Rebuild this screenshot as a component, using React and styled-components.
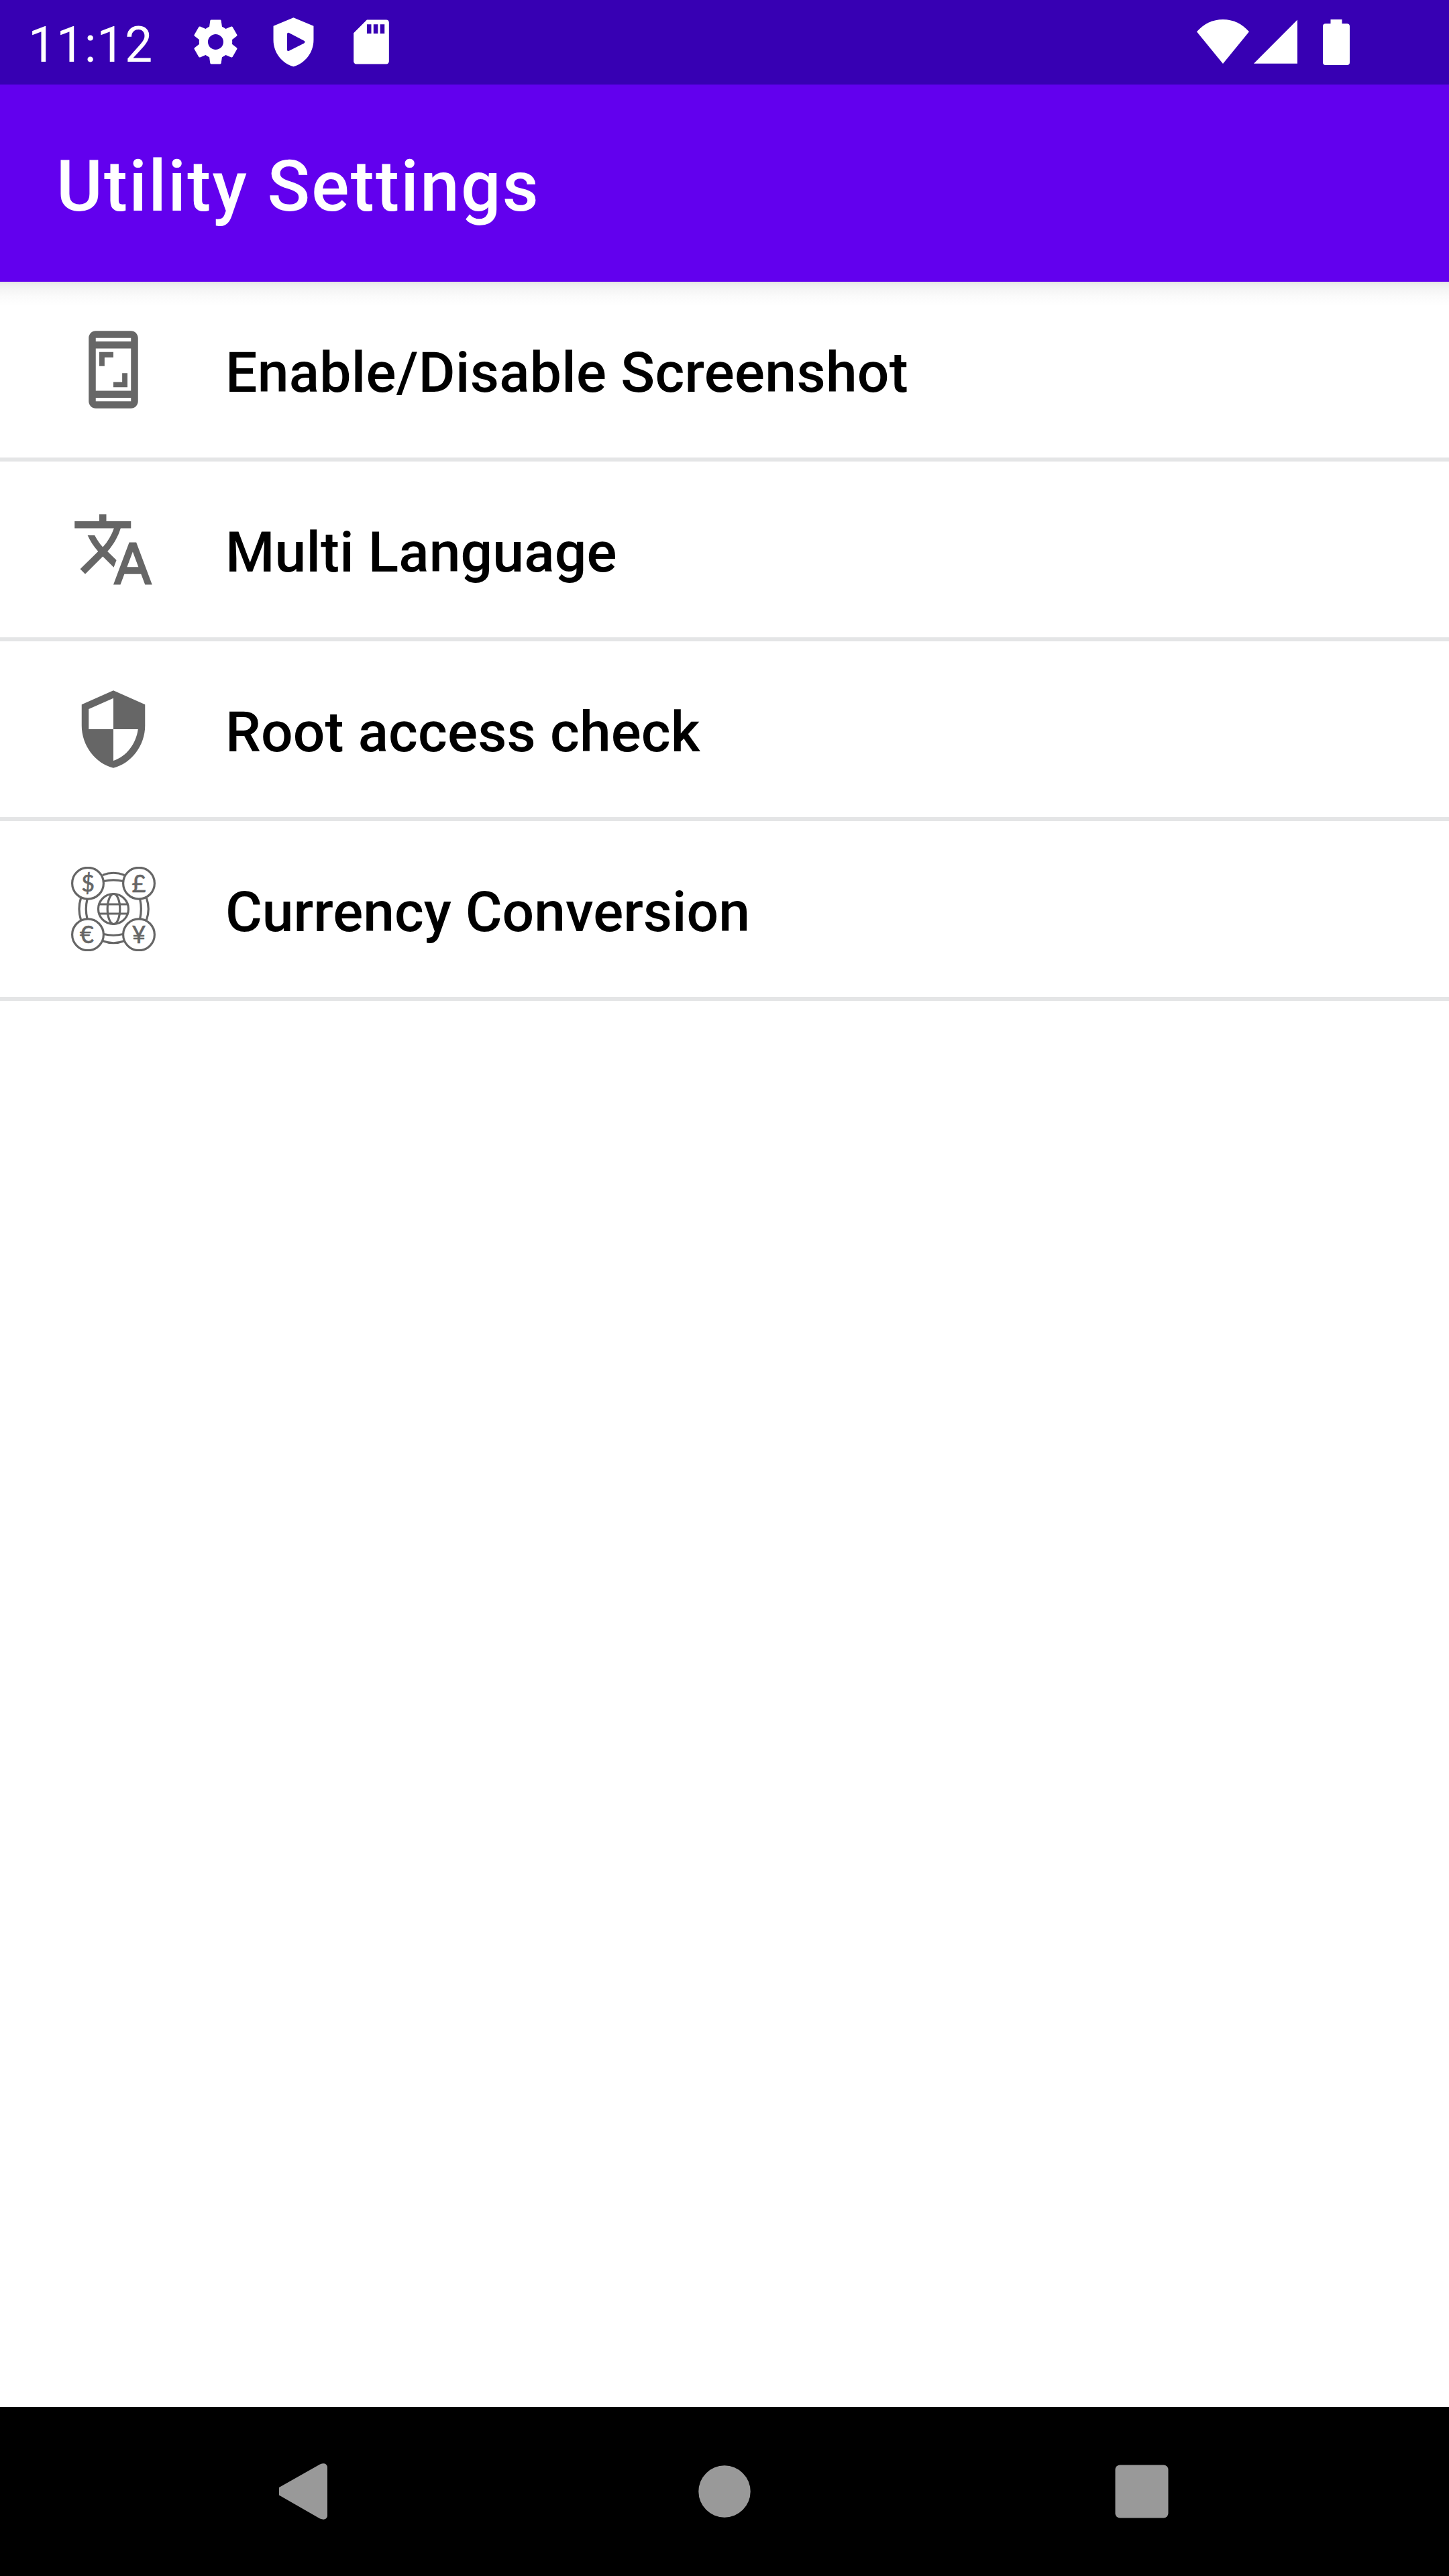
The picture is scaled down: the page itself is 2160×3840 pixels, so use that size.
import React from 'react';
import styled, { createGlobalStyle } from 'styled-components';

const GlobalStyle = createGlobalStyle`
  * { box-sizing: border-box; }
  body { margin: 0; background: #fff; }
`;

const Screen = styled.div`
  display: flex;
  flex-direction: column;
  width: 2160px;
  height: 3840px;
  background: #fff;
  font-family: Roboto, "Noto Sans", sans-serif;
`;

const StatusBar = styled.header`
  display: flex;
  flex: none;
  align-items: center;
  justify-content: space-between;
  height: 126px;
  padding: 0 148px 0 42px;
  background: #3700b3;
  color: #fff;
`;

const StatusGroup = styled.div`
  display: flex;
  align-items: center;
`;

const Clock = styled.time`
  width: 240px;
  padding-top: 0.1em;
  font-size: 73.5px;
  line-height: 1.172;
  letter-spacing: 0.6px;
`;

const Notifications = styled.div`
  display: flex;
  gap: 37px;
`;

const Glyph = styled.svg`
  display: block;
  flex: none;
  width: ${(p) => p.$w}px;
  height: ${(p) => p.$h ?? p.$w}px;
  margin-left: ${(p) => p.$gap ?? 0}px;
  fill: currentColor;
`;

const AppBar = styled.div`
  display: flex;
  flex: none;
  align-items: center;
  height: 294px;
  padding: 0 84px;
  background: #6200ee;
  color: #fff;
`;

const Title = styled.h1`
  margin: 0;
  padding-top: 0.1em;
  font-size: 105px;
  font-weight: 500;
  line-height: 1.172;
  letter-spacing: 2.25px;
`;

const List = styled.ul`
  flex: 1;
  margin: 0;
  padding: 0;
  list-style: none;
  background: linear-gradient(#e3e3e3 0, #eeeeee 4px, #f5f5f5 12px, #fbfbfb 22px, #fff 36px) no-repeat 0 0 / 100% 36px;
`;

const Row = styled.li`
  display: flex;
  align-items: center;
  gap: 104px;
  height: 268px;
  padding-left: 106px;
  border-bottom: 6px solid #e4e5e6;
  color: #666;
`;

const Label = styled.span`
  padding-top: 10px;
  color: #000;
  font-size: 84px;
  font-weight: 500;
  line-height: 1.172;
  letter-spacing: ${(p) => p.$tracking}px;
`;

const NavBar = styled.nav`
  display: grid;
  flex: none;
  grid-template-columns: repeat(3, 622px);
  align-items: center;
  justify-content: center;
  justify-items: center;
  height: 252px;
  background: #000;
  color: #999;
`;

const GearIcon = () => (
  <Glyph $w={79} viewBox="0 0 24 24">
    <path d="M19.43 12.98c.04-.32.07-.64.07-.98s-.03-.66-.07-.98l2.11-1.65c.19-.15.24-.42.12-.64l-2-3.46c-.12-.22-.39-.3-.61-.22l-2.49 1c-.52-.4-1.08-.73-1.69-.98l-.38-2.65C14.46 2.18 14.25 2 14 2h-4c-.25 0-.46.18-.49.42l-.38 2.65c-.61.25-1.17.59-1.69.98l-2.49-1c-.23-.09-.49 0-.61.22l-2 3.46c-.13.22-.07.49.12.64l2.11 1.65c-.04.32-.07.65-.07.98s.03.66.07.98l-2.11 1.65c-.19.15-.24.42-.12.64l2 3.46c.12.22.39.3.61.22l2.49-1c.52.4 1.08.73 1.69.98l.38 2.65c.03.24.24.42.49.42h4c.25 0 .46-.18.49-.42l.38-2.65c.61-.25 1.17-.59 1.69-.98l2.49 1c.23.09.49 0 .61-.22l2-3.46c.12-.22.07-.49-.12-.64l-2.11-1.65zM12 15.5c-1.93 0-3.5-1.57-3.5-3.5s1.57-3.5 3.5-3.5 3.5 1.57 3.5 3.5-1.57 3.5-3.5 3.5z" />
  </Glyph>
);

const ProtectIcon = () => (
  <Glyph $w={79} viewBox="0 0 24 24">
    <path
      fillRule="evenodd"
      d="M12 1L2.9 4.8v6.4C2.9 16.8 6.8 21.8 12 23.2c5.2-1.4 9.1-6.4 9.1-12V4.8zM9.1 8.5c0-.6.5-.8.9-.6l6.8 3.6c.5.3.5.8 0 1.1L10 16c-.5.3-.9 0-.9-.5z"
    />
  </Glyph>
);

const SdCardIcon = () => (
  <Glyph $w={79} viewBox="0 0 24 24">
    <path d="M18.8 2H10L4 8v12.8c0 .7.5 1.2 1.2 1.2h13.6c.7 0 1.2-.5 1.2-1.2V3.2c0-.7-.5-1.2-1.2-1.2zM12 8.2h-2V4h2zm3 0h-2V4h2zm3 0h-2V4h2z" />
  </Glyph>
);

const WifiIcon = () => (
  <Glyph $w={78} $h={68} viewBox="0 0 78 68">
    <path d="M0 18.3C11 6 24 0 39 0s28 6 39 18.3L39 66z" />
  </Glyph>
);

const SignalIcon = () => (
  <Glyph $w={65} $h={68} $gap={7} viewBox="0 0 65 68">
    <path d="M65 .5v65.3H0z" />
  </Glyph>
);

const BatteryIcon = () => (
  <Glyph $w={40} $h={68} $gap={38} viewBox="0 0 40 68">
    <path d="M11.500 0h17v6.300H36a4 4 0 0 1 4 4V64a4 4 0 0 1-4 4H4a4 4 0 0 1-4-4V10.300a4 4 0 0 1 4-4h7.500z" />
  </Glyph>
);

const ScreenshotIcon = () => (
  <Glyph $w={126} viewBox="0 0 24 24">
    <path d="M17 1H7c-1.100 0-2 .9-2 2v18c0 1.100.9 2 2 2h10c1.100 0 2-.9 2-2V3c0-1.100-.9-2-2-2zm0 20H7v-1h10v1zm0-3H7V6h10v12zm0-14H7V3h10v1zM9.500 8.500H12V7H8v4h1.500zM12 17h4v-4h-1.500v2.500H12z" />
  </Glyph>
);

const TranslateIcon = () => (
  <Glyph $w={126} viewBox="0 0 24 24">
    <path d="M12.870 15.070l-2.540-2.510.03-.03c1.740-1.940 2.980-4.170 3.710-6.530H17V4h-7V2H8v2H1v1.990h11.170C11.500 7.920 10.440 9.750 9 11.350 8.070 10.320 7.300 9.190 6.690 8h-2c.73 1.630 1.730 3.170 2.980 4.560l-5.090 5.020L4 19l5-5 3.110 3.110.76-2.040zM18.500 10h-2L12 22h2l1.120-3h4.750L21 22h2l-4.500-12zm-2.620 7l1.620-4.330L19.120 17h-3.240z" />
  </Glyph>
);

const SecurityIcon = () => (
  <Glyph $w={126} viewBox="0 0 24 24">
    <path d="M12 1L3 5v6c0 5.550 3.840 10.740 9 12 5.160-1.260 9-6.450 9-12V5l-9-4zm0 10.990h7c-.53 4.120-3.280 7.790-7 8.940V12H5V6.300l7-3.110v8.800z" />
  </Glyph>
);

const CurrencySign = styled.text`
  fill: currentColor;
  stroke: currentColor;
  stroke-width: 0.7px;
  font-family: Lato, sans-serif;
  font-size: ${(p) => p.$size ?? 36}px;
  text-anchor: middle;
`;

const CurrencyIcon = () => (
  <Glyph $w={126} viewBox="0 0 126 126">
    <g fill="none" stroke="currentColor" strokeWidth="3.2">
      <circle cx="25" cy="24.700" r="23.400" />
      <circle cx="101" cy="24.700" r="23.400" />
      <circle cx="25" cy="101.300" r="23.400" />
      <circle cx="101" cy="101.300" r="23.400" />
      <circle cx="63" cy="63" r="22.500" />
      <ellipse cx="63.500" cy="63" rx="9.300" ry="22.500" />
      <path d="M42 56h42M42 70h42" />
      <path d="M47 12.500Q63 6 79.500 12.500M48.700 21.500Q63 18.300 77.500 21.500" />
      <path d="M47 110.500Q63 117 79.500 110.500M48.700 100.500Q63 104 77.500 100.500" />
      <path d="M14.500 47Q9.500 63 14.500 79M24 48.500Q20.500 63 24 77.500" />
      <path d="M112.500 47Q118 63 112.500 79M102.700 48.500Q106 63 102.700 77.500" />
      <CurrencySign x="25" y="37" $size={34}>$</CurrencySign>
      <CurrencySign x="101" y="38">£</CurrencySign>
      <CurrencySign x="23.500" y="114">€</CurrencySign>
      <CurrencySign x="101" y="114">¥</CurrencySign>
    </g>
  </Glyph>
);

const BackIcon = () => (
  <Glyph $w={84} viewBox="7 0 84 84">
    <path d="M2.500 38.500L68 1.500Q77 -2 79 5V79Q77 86 68 82.500L7 47.500Q1.500 42 7 36.500z" />
  </Glyph>
);

const HomeIcon = () => (
  <Glyph $w={84} viewBox="0 0 84 84">
    <circle cx="42" cy="42" r="38.700" />
  </Glyph>
);

const RecentsIcon = () => (
  <Glyph $w={84} viewBox="0 0 84 84">
    <rect x="2.500" y="2.500" width="79" height="79" rx="7" />
  </Glyph>
);

const items = [
  { label: 'Enable/Disable Screenshot', Icon: ScreenshotIcon, tracking: 0.28 },
  { label: 'Multi Language', Icon: TranslateIcon, tracking: 0.15 },
  { label: 'Root access check', Icon: SecurityIcon, tracking: 0.13 },
  { label: 'Currency Conversion', Icon: CurrencyIcon, tracking: 0 },
];

export default function App() {
  return (
    <Screen>
      <GlobalStyle />
      <StatusBar>
        <StatusGroup>
          <Clock>11:12</Clock>
          <Notifications>
            <GearIcon />
            <ProtectIcon />
            <SdCardIcon />
          </Notifications>
        </StatusGroup>
        <StatusGroup>
          <WifiIcon />
          <SignalIcon />
          <BatteryIcon />
        </StatusGroup>
      </StatusBar>
      <AppBar>
        <Title>Utility Settings</Title>
      </AppBar>
      <List>
        {items.map(({ label, Icon, tracking }) => (
          <Row key={label}>
            <Icon />
            <Label $tracking={tracking}>{label}</Label>
          </Row>
        ))}
      </List>
      <NavBar>
        <BackIcon />
        <HomeIcon />
        <RecentsIcon />
      </NavBar>
    </Screen>
  );
}
